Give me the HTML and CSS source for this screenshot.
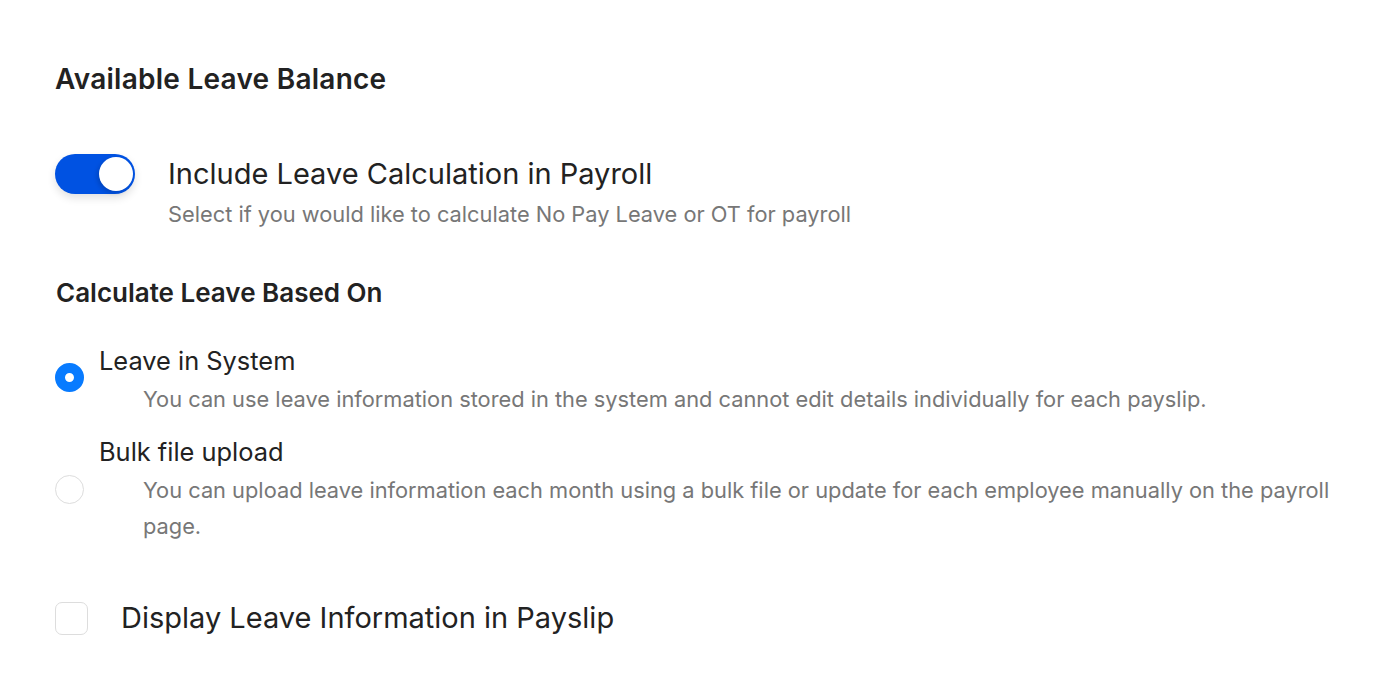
FILE: index.html
```html
<!DOCTYPE html>
<html lang="en">
<head>
    <meta charset="UTF-8">
    <meta name="viewport" content="width=device-width, initial-scale=1.0">
    <title>Leave Settings</title>
    <link rel="stylesheet" href="styles.css">
</head>
<body>
    <div class="container">
        <h1 class="title">Available Leave Balance</h1>

        <div class="toggle-row">
            <label class="switch">
                <input type="checkbox" checked>
                <span class="slider"></span>
            </label>
            <div class="toggle-text">
                <div class="toggle-label">Include Leave Calculation in Payroll</div>
                <div class="toggle-desc">Select if you would like to calculate No Pay Leave or OT for payroll</div>
            </div>
        </div>

        <h2 class="subtitle">Calculate Leave Based On</h2>

        <div class="options">
            <label class="option">
                <input type="radio" name="leave-source" checked>
                <span class="radio"></span>
                <span class="option-text">
                    <span class="option-label">Leave in System</span>
                    <span class="option-desc">You can use leave information stored in the system and cannot edit details individually for each payslip.</span>
                </span>
            </label>
            <label class="option">
                <input type="radio" name="leave-source">
                <span class="radio"></span>
                <span class="option-text">
                    <span class="option-label">Bulk file upload</span>
                    <span class="option-desc">You can upload leave information each month using a bulk file or update for each employee manually on the payroll page.</span>
                </span>
            </label>
        </div>

        <label class="check-row">
            <input type="checkbox">
            <span class="box"></span>
            <span class="check-label">Display Leave Information in Payslip</span>
        </label>
    </div>
</body>
</html>
```

FILE: styles.css
```css
body {
    margin: 0;
    font-family: Inter, "Noto Sans", sans-serif;
    background-color: #fff;
    color: #222;
}

.container {
    padding: 61px 56px 0 55px;
}

.title {
    margin: 0;
    font-size: 28px;
    line-height: 36px;
    font-weight: 600;
    letter-spacing: 0.25px;
}

.toggle-row {
    display: flex;
    align-items: flex-start;
    gap: 33px;
    margin-top: 57px;
}

.switch {
    position: relative;
    width: 80px;
    height: 40px;
    flex-shrink: 0;
}

.switch input,
.option input,
.check-row input {
    display: none;
}

.slider {
    display: block;
    width: 80px;
    height: 40px;
    border-radius: 20px;
    background-color: #0052e2;
    box-shadow: 0 4px 8px rgba(0, 0, 0, 0.12);
}

.slider::after {
    content: "";
    position: absolute;
    top: 3px;
    right: 2px;
    width: 34px;
    height: 34px;
    border-radius: 50%;
    background-color: #fff;
    box-shadow: -2px 2px 4px rgba(0, 0, 0, 0.15);
}

.toggle-label {
    font-size: 29px;
    line-height: 40px;
}

.toggle-desc {
    margin-top: 2px;
    font-size: 21.8px;
    line-height: 36px;
    color: #777;
}

.subtitle {
    margin: 44px 0 0 1px;
    font-size: 26px;
    line-height: 34px;
    font-weight: 600;
}

.options {
    display: flex;
    flex-direction: column;
    gap: 18px;
    margin-top: 34px;
}

.option {
    display: flex;
    align-items: center;
    gap: 15px;
}

.radio {
    width: 29px;
    height: 29px;
    flex-shrink: 0;
    box-sizing: border-box;
    border-radius: 50%;
    border: 1px solid #ddd;
    background-color: #fff;
}

.option input:checked + .radio {
    border: 10px solid #087bff;
    margin-top: -6px;
}

.option-text {
    display: flex;
    flex-direction: column;
}

.option-label {
    font-size: 25.4px;
    line-height: 34px;
}

.option-desc {
    margin: 3px 0 0 44px;
    font-size: 21.8px;
    line-height: 36px;
    color: #777;
}

.check-row {
    display: flex;
    align-items: center;
    gap: 33px;
    margin-top: 54px;
}

.box {
    width: 33px;
    height: 33px;
    box-sizing: border-box;
    border: 1px solid #ddd;
    border-radius: 7px;
    flex-shrink: 0;
}

.check-label {
    font-size: 29px;
    line-height: 40px;
}
```
